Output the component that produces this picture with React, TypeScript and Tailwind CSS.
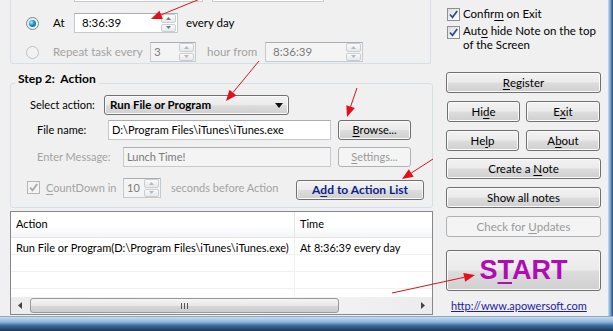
import React from 'react';

const btnBg =
  'border border-[#707070] rounded-[3px] bg-[linear-gradient(#f2f2f2_0%,#ebebeb_48%,#dddddd_52%,#cfcfcf_100%)] shadow-[inset_0_0_0_1px_#fbfbfb]';
const btnOff = 'border border-[#adb2b5] rounded-[3px] bg-[#f4f4f4] text-[#9a9a9a]';

function Btn({ children, className = '', disabled = false }: { children: React.ReactNode; className?: string; disabled?: boolean }) {
  return (
    <div className={`flex items-center justify-center shrink-0 whitespace-pre ${disabled ? btnOff : btnBg} ${className}`}>
      {children}
    </div>
  );
}

function U({ children }: { children: React.ReactNode }) {
  return <span className="underline underline-offset-[2px]">{children}</span>;
}

function Spinner({ disabled = false }: { disabled?: boolean }) {
  const c = disabled ? '#b8b8b8' : '#6d7a86';
  return (
    <div className="flex flex-col w-[15px] h-[18px] mr-[1px] gap-[1px] shrink-0">
      {[0, 1].map((i) => (
        <div
          key={i}
          className="flex-1 flex items-center justify-center border border-[#c9ced3] rounded-[2px] bg-[linear-gradient(#fafafa,#e6e9ec)]"
        >
          <svg width="5" height="3" viewBox="0 0 5 3">
            <polygon points={i === 0 ? '0,3 5,3 2.5,0' : '0,0 5,0 2.5,3'} fill={c} />
          </svg>
        </div>
      ))}
    </div>
  );
}

function Field({
  value,
  className = '',
  disabled = false,
  spin = false,
}: {
  value: string;
  className?: string;
  disabled?: boolean;
  spin?: boolean;
}) {
  return (
    <div
      className={`flex items-center h-[20px] shrink-0 border border-[#c5cad1] border-t-[#abadb3] ${
        disabled ? 'bg-[#f4f4f4] text-[#7a7a7a]' : 'bg-white'
      } ${className}`}
    >
      <span className="flex-1 pl-[3px] whitespace-nowrap overflow-hidden">{value}</span>
      {spin && <Spinner disabled={disabled} />}
    </div>
  );
}

function Check({ disabled = false, className = '' }: { disabled?: boolean; className?: string }) {
  return (
    <span
      className={`w-[13px] h-[13px] shrink-0 flex items-center justify-center border ${
        disabled ? 'border-[#b5b5b5] bg-[#f4f4f4]' : 'border-[#8e8f8f] bg-[linear-gradient(135deg,#d9dde2,#ffffff)]'
      } ${className}`}
    >
      <svg width="11" height="11" viewBox="0 0 11 11">
        <path d="M2 5.5 L4.5 8.3 L9.2 2" fill="none" stroke={disabled ? '#a6a6a6' : '#2b4c84'} strokeWidth="1.7" />
      </svg>
    </span>
  );
}

function Radio({ on = false, disabled = false }: { on?: boolean; disabled?: boolean }) {
  return (
    <span
      className={`w-[13px] h-[13px] shrink-0 rounded-full flex items-center justify-center border ${
        disabled ? 'border-[#c2c2c2] bg-[#f2f2f2]' : 'border-[#7b8790] bg-[linear-gradient(135deg,#dfe3e6,#ffffff)]'
      }`}
    >
      {on && (
        <span className="w-[7px] h-[7px] rounded-full bg-[radial-gradient(circle_at_35%_35%,#a8ecff_0%,#1896c4_45%,#0b4f6e_100%)]" />
      )}
    </span>
  );
}

function Arrow({ x1, y1, x2, y2 }: { x1: number; y1: number; x2: number; y2: number }) {
  const dx = x2 - x1;
  const dy = y2 - y1;
  const len = Math.hypot(dx, dy);
  const ux = dx / len;
  const uy = dy / len;
  const bx = x2 - ux * 11;
  const by = y2 - uy * 11;
  const px = -uy * 4.5;
  const py = ux * 4.5;
  return (
    <g>
      <line x1={x1} y1={y1} x2={bx} y2={by} stroke="#d9141c" strokeWidth="1" />
      <polygon points={`${x2},${y2} ${bx + px},${by + py} ${bx - px},${by - py}`} fill="#e3101a" />
    </g>
  );
}

export default function App() {
  return (
    <div className="w-[613px] h-[331px] bg-[#f0f0f0] relative overflow-hidden flex flex-col text-[11px] text-black font-['Lato','Liberation_Sans',sans-serif]">
      <div className="flex h-[316px]">
        {/* left side */}
        <div className="w-[433px] pl-[10px] flex flex-col">
          {/* Step 1 group (top cut off) */}
          <div className="w-[421px] h-[64px] shrink-0 border-x border-b border-[#d5dfe5] rounded-b-[3px] flex flex-col">
            <div className="flex h-[20px] mt-[-18px]">
              <Field value="" className="ml-[63px] w-[129px]" />
              <Field value="" className="ml-[9px] w-[112px]" />
            </div>
            <div className="flex items-center h-[20px] mt-[11px] text-[11.5px]">
              <span className="ml-[15px]">
                <Radio on />
              </span>
              <span className="ml-[14px] w-[21px]">At</span>
              <Field value="8:36:39" className="w-[104px] pl-[4px]" spin />
              <span className="ml-[8px]">every day</span>
            </div>
            <div className="flex items-center h-[20px] mt-[9px] text-[#a3a3a3] text-[11.5px]">
              <span className="ml-[15px]">
                <Radio disabled />
              </span>
              <span className="ml-[14px] w-[97px] whitespace-nowrap">Repeat task every</span>
              <Field value="3" className="w-[46px]" disabled spin />
              <span className="ml-[11px] w-[58px] whitespace-nowrap">hour from</span>
              <Field value="8:36:39" className="w-[98px] pl-[4px]" disabled spin />
            </div>
          </div>

          {/* Step 2 group */}
          <fieldset className="mt-[7px] w-[423px] border border-[#d5dfe5] rounded-[3px] flex flex-col pb-[7px]">
            <legend className="ml-[4px] px-[3px] pb-[9px] leading-[15px] font-bold text-[12px]">Step 2:&nbsp; Action</legend>
            <div className="flex items-center h-[20px]">
              <span className="ml-[19px] w-[74px] whitespace-nowrap">Select action:</span>
              <div className={`w-[185px] h-[20px] flex items-center pl-[5px] pr-[5px] font-bold text-[11.5px] ${btnBg}`}>
                <span className="flex-1">Run File or Program</span>
                <svg width="8" height="5" viewBox="0 0 8 5">
                  <polygon points="0,0 8,0 4,5" fill="#111" />
                </svg>
              </div>
            </div>
            <div className="flex items-center h-[20px] mt-[5px]">
              <span className="ml-[26px] w-[71px] whitespace-nowrap">File name:</span>
              <Field value="D:\Program Files\iTunes\iTunes.exe" className="w-[223px]" />
              <Btn className="ml-[7px] w-[73px] h-[20px]">
                <U>B</U>rowse...
              </Btn>
            </div>
            <div className="flex items-center h-[20px] mt-[7px]">
              <span className="ml-[26px] w-[86px] whitespace-nowrap text-[#a3a3a3]">Enter Message:</span>
              <Field value="Lunch Time!" className="w-[208px]" disabled />
              <Btn className="ml-[7px] w-[73px] h-[20px]" disabled>
                <U>S</U>ettings...
              </Btn>
            </div>
            <div className="flex items-start h-[22px] mt-[11px] text-[#a3a3a3]">
              <Check disabled className="ml-[16px] mt-[3px]" />
              <span className="ml-[6px] w-[77px] leading-[20px] whitespace-nowrap">
                <U>C</U>ountDown in
              </span>
              <Field value="10" className="w-[38px]" disabled spin />
              <span className="ml-[10px] leading-[20px] whitespace-nowrap">seconds before Action</span>
              <Btn className="ml-auto mr-[8px] mt-[2px] w-[128px] h-[20px] font-bold text-[12px] text-[#0b1f8a]">
                A<U>d</U>d to Action List
              </Btn>
            </div>
          </fieldset>

          {/* list view */}
          <div className="mt-[3px] w-[423px] h-[104px] border border-[#828790] bg-white flex flex-col">
            <div className="flex h-[26px] shrink-0 border-b border-[#e5e5e5] bg-[linear-gradient(#ffffff_0%,#ffffff_55%,#f4f5f7_100%)]">
              <div className="w-[284px] border-r border-[#e5e5e5] pl-[5px] flex items-center">Action</div>
              <div className="flex-1 pl-[5px] flex items-center">Time</div>
            </div>
            {['r1', 'r2', 'r3'].map((k, i) => (
              <div key={k} className="flex h-[17px] shrink-0 border-b border-[#f0f0f0]">
                <div className="w-[284px] border-r border-[#f0f0f0] pl-[5px] leading-[19px] whitespace-nowrap">
                  {i === 0 ? 'Run File or Program(D:\\Program Files\\iTunes\\iTunes.exe)' : ''}
                </div>
                <div className="flex-1 pl-[5px] leading-[19px] whitespace-nowrap">{i === 0 ? 'At 8:36:39 every day' : ''}</div>
              </div>
            ))}
            <div className="flex flex-1">
              <div className="w-[284px] border-r border-[#f0f0f0]" />
            </div>
            <div className="h-[17px] shrink-0 flex items-center bg-[linear-gradient(90deg,#ececec,#f8f8f8_50%,#ececec)]">
              <div className="w-[18px] flex justify-center">
                <svg width="4" height="7" viewBox="0 0 4 7">
                  <polygon points="4,0 4,7 0,3.5" fill="#444" />
                </svg>
              </div>
              <div className="ml-[1px] w-[309px] h-[15px] rounded-[3px] border border-[#999] bg-[linear-gradient(#f4f4f4_0%,#e8e8e8_50%,#d6d6d6_51%,#cdcdcd_100%)] flex items-center justify-center gap-[2px]">
                <span className="w-[1px] h-[6px] bg-[#555]" />
                <span className="w-[1px] h-[6px] bg-[#555]" />
                <span className="w-[1px] h-[6px] bg-[#555]" />
              </div>
              <div className="flex-1" />
              <div className="w-[18px] flex justify-center">
                <svg width="4" height="7" viewBox="0 0 4 7">
                  <polygon points="0,0 0,7 4,3.5" fill="#444" />
                </svg>
              </div>
            </div>
          </div>
        </div>

        {/* right side */}
        <div className="ml-[13px] w-[155px] flex flex-col text-[11.5px]">
          <div className="flex items-start mt-[7px]">
            <Check className="ml-[1px] mt-[1px]" />
            <span className="ml-[3px] leading-[14px] whitespace-pre">
              Confir<U>m</U> on Exit
            </span>
          </div>
          <div className="flex items-start mt-[3px]">
            <Check className="ml-[1px] mt-[2px]" />
            <span className="ml-[3px] leading-[14px] whitespace-nowrap">
              Aut<U>o</U> hide Note on the top
              <br />
              of the Screen
            </span>
          </div>
          <Btn className="mt-[20px] h-[21px] w-full">
            <U>R</U>egister
          </Btn>
          <div className="flex mt-[8px]">
            <Btn className="ml-[1px] w-[73px] h-[21px]">
              Hi<U>d</U>e
            </Btn>
            <Btn className="ml-auto mr-[1px] w-[74px] h-[21px]">
              E<U>x</U>it
            </Btn>
          </div>
          <div className="flex mt-[8px]">
            <Btn className="w-[73px] h-[21px]">
              He<U>l</U>p
            </Btn>
            <Btn className="ml-auto mr-[1px] w-[74px] h-[21px]">
              A<U>b</U>out
            </Btn>
          </div>
          <Btn className="mt-[7px] h-[21px] w-full">
            Create a{' '}<U>N</U>ote
          </Btn>
          <Btn className="mt-[8px] h-[21px] w-full">Show all notes</Btn>
          <Btn className="mt-[8px] h-[21px] w-full" disabled>
            Check for{' '}<U>U</U>pdates
          </Btn>
          <Btn className="mt-[13px] h-[41px] w-full">
            <span className="text-[27px] font-bold leading-none text-[#b00cb4] font-['Liberation_Sans',sans-serif]">
              S<span className="underline decoration-[2px] underline-offset-[3px]">T</span>ART
            </span>
          </Btn>
          <div className="mt-[8px] pl-[5px] leading-[14px] text-[11px] text-[#1b1ba8] underline whitespace-nowrap">
            http://www.apowersoft.com
          </div>
        </div>

        <div className="flex-1" />
        <div className="w-[5px] bg-[linear-gradient(90deg,#cfe1f2,#6f9fcf_50%,#234b75)]" />
      </div>
      <div className="h-[15px] border-t border-[#8fa9c2] bg-[linear-gradient(#c6dcf0_0%,#8fb6dc_35%,#3f6e9e_60%,#163656_100%)]" />

      <svg className="absolute inset-0 pointer-events-none" width="613" height="331">
        <Arrow x1={200} y1={-1} x2={151} y2={19} />
        <Arrow x1={259} y1={61} x2={226} y2={101} />
        <Arrow x1={357} y1={88} x2={347} y2={117} />
        <Arrow x1={433} y1={159} x2={402} y2={179} />
        <Arrow x1={392} y1={293} x2={475} y2={275} />
      </svg>
    </div>
  );
}
